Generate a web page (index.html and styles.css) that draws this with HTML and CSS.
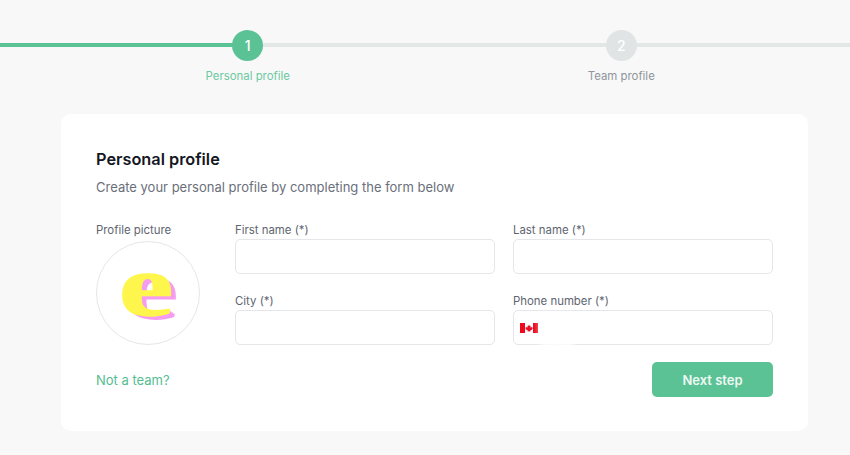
FILE: index.html
```html
<!DOCTYPE html>
<html lang="en">
<head>
<meta charset="utf-8">
<title>Personal profile</title>
<link rel="stylesheet" href="styles.css">
</head>
<body>
<div class="page">
  <div class="stepper">
    <div class="step step-active">
      <div class="step-circle">1</div>
      <div class="step-label">Personal profile</div>
    </div>
    <div class="step">
      <div class="step-circle">2</div>
      <div class="step-label">Team profile</div>
    </div>
  </div>
  <main class="card">
    <h1 class="card-title">Personal profile</h1>
    <p class="card-sub">Create your personal profile by completing the form below</p>
    <div class="form-row">
      <div class="avatar-col">
        <div class="label">Profile picture</div>
        <div class="avatar"><span class="avatar-e">e</span></div>
      </div>
      <div class="fields">
        <div class="field">
          <label class="label">First name (*)</label>
          <div class="input"></div>
        </div>
        <div class="field">
          <label class="label">Last name (*)</label>
          <div class="input"></div>
        </div>
        <div class="field">
          <label class="label">City (*)</label>
          <div class="input"></div>
        </div>
        <div class="field">
          <label class="label">Phone number (*)</label>
          <div class="input input-phone">
            <svg class="flag" width="18" height="10" viewBox="0 0 18 10">
              <rect width="18" height="10" fill="#fff"/>
              <rect width="5" height="10" fill="#ee0a1c"/>
              <rect x="13" width="5" height="10" fill="#ee0a1c"/>
              <path d="M9 1.6l.8 1.5.9-.4-.4 2 1-.9.4.8 1.1-.2-.4 1.2.4.3-2.5 1.6.2.9H9.2V8h-.4v.4H7.6l.2-.9-2.5-1.6.4-.3-.4-1.2 1.1.2.4-.8 1 .9-.4-2 .9.4z" fill="#e8102a"/>
            </svg>
            <span class="redact"></span>
          </div>
        </div>
      </div>
    </div>
    <div class="card-foot">
      <a class="link" href="#">Not a team?</a>
      <button class="btn" type="button">Next step</button>
    </div>
  </main>
</div>
</body>
</html>
```
FILE: styles.css
```css
* { box-sizing: border-box; }
html, body { margin: 0; height: 100%; }
body {
  background: #f8f8f8;
  font-family: Inter, "Liberation Sans", sans-serif;
  color: #5e6470;
  overflow: hidden;
}
.page { width: 850px; height: 455px; padding-top: 30px; }
.stepper {
  display: flex;
  padding: 0 42px 0 61px;
  background:
    linear-gradient(to right, #5bc295 0, #5bc295 248px, #e3e8e7 248px, #e3e8e7 100%)
    0 13px / 100% 4px no-repeat;
}
.step { flex: 1; display: flex; flex-direction: column; align-items: center; }
.step-circle {
  width: 31px;
  height: 31px;
  border-radius: 50%;
  background: #e1e4e5;
  color: #fff;
  font-size: 14px;
  font-weight: 500;
  display: flex;
  align-items: center;
  justify-content: center;
}
.step-label {
  margin-top: 8px;
  font-size: 11.4px;
  line-height: 15px;
  color: #8f959d;
}
.step-active .step-circle { background: #5bc295; }
.step-active .step-label { color: #6cc9a1; }
.card {
  margin: 30px 0 0 61px;
  width: 747px;
  height: 317px;
  background: #fff;
  border-radius: 10px;
  padding: 35px 35px 0 35px;
}
.card-title {
  margin: 0;
  font-size: 16.3px;
  line-height: 21px;
  font-weight: 600;
  color: #14171f;
}
.card-sub {
  margin: 8px 0 0;
  font-size: 13px;
  line-height: 18px;
  color: #6a6f7a;
}
.form-row { display: flex; margin-top: 26px; }
.avatar-col { width: 139px; flex: none; }
.label {
  display: block;
  font-size: 11.4px;
  line-height: 16px;
  color: #5e6470;
}
.avatar {
  margin-top: 3px;
  width: 104px;
  height: 104px;
  border-radius: 50%;
  border: 1px solid #e4e6e9;
  display: flex;
  align-items: center;
  justify-content: center;
}
.avatar-e {
  font-family: "Liberation Serif", serif;
  font-weight: 700;
  font-size: 86px;
  line-height: 60px;
  color: #fff64d;
  -webkit-text-stroke: 1.5px #fff64d;
  text-shadow: 1px 1px 0 #f59cf0, 2px 2px 0 #f59cf0, 3px 3px 0 #f59cf0, 4px 4px 0 #f59cf0;
  transform: translate(-2px, -7px) scaleX(1.42);
}
.fields {
  display: grid;
  grid-template-columns: 260px 260px;
  column-gap: 18px;
  row-gap: 19px;
  width: 538px;
}
.input {
  margin-top: 1px;
  height: 35px;
  border: 1px solid #e4e6e9;
  border-radius: 5px;
  background: #fff;
}
.input-phone {
  position: relative;
  display: flex;
  align-items: center;
  padding-left: 6px;
}
.flag { display: block; }
.redact {
  position: absolute;
  left: 26px;
  top: 3px;
  width: 34px;
  height: 33px;
  background: #fff;
  filter: blur(3px);
}
.card-foot {
  display: flex;
  justify-content: space-between;
  align-items: center;
  margin-top: 17px;
  width: 677px;
}
.link {
  font-size: 13px;
  color: #53bd8f;
  text-decoration: none;
}
.btn {
  width: 121px;
  height: 35px;
  border: 0;
  border-radius: 5px;
  background: #5bc295;
  color: #eef9f4;
  font-family: inherit;
  font-size: 13px;
  font-weight: 600;
}
```
